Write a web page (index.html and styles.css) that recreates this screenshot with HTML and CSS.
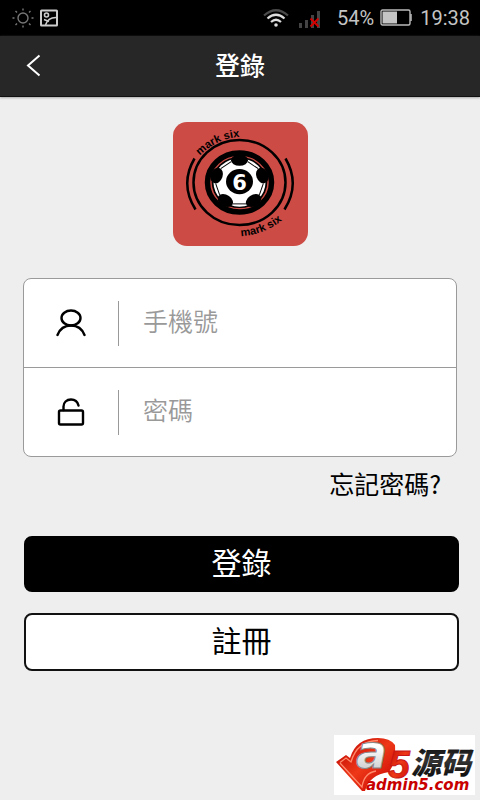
FILE: index.html
```html
<!DOCTYPE html>
<html lang="zh-Hant">
<head>
<meta charset="utf-8">
<meta name="viewport" content="width=device-width, initial-scale=1">
<title>登錄</title>
<link rel="stylesheet" href="styles.css">
</head>
<body>
<div class="status">
  <svg class="sun" width="22" height="20" viewBox="0 0 22 20" fill="none" stroke="#777" stroke-width="1.4" aria-hidden="true">
    <circle cx="11" cy="10" r="5"/>
    <path d="M11 .5v2M11 17.5v2M.5 10h2M19.5 10h2M3.5 3l1.5 1.4M17 15.6l1.5 1.4M3.5 17L5 15.6M17 4.400l1.500-1.400"/>
  </svg>
  <svg class="photo" width="18" height="18" viewBox="0 0 18 18" fill="none" stroke="#ccc" stroke-width="1.6" aria-hidden="true">
    <rect x="1" y="1.500" width="16" height="15" rx=".5" stroke-width="2"/>
    <circle cx="6.500" cy="6" r="2"/>
    <path d="M5.500 16C7 11 10 8.500 16 8.500M4 10.500l5 2"/>
  </svg>
  <svg class="wifi" width="26" height="20" viewBox="0 0 26 20" fill="none" stroke="#ddd" stroke-width="2.200" aria-hidden="true">
    <path d="M1 7.500Q13-3 25 7.500" stroke="#4a4a4a"/>
    <path d="M4.500 10.500Q13 3 21.500 10.500M8 14q5-4.500 10 0"/>
    <circle cx="13" cy="17" r="1.800" fill="#ddd" stroke="none"/>
  </svg>
  <svg class="signal" width="22" height="20" viewBox="0 0 22 20" aria-hidden="true">
    <path d="M0 15h3v5H0zM6 12h3v8H6zM12 7h3v13h-3zM18 3h3v17h-3z" fill="#444"/>
    <path d="M11.500 10.500l8 8M19.500 10.500l-8 8" stroke="#d40000" stroke-width="2"/>
  </svg>
  <span class="percent">54%</span>
  <svg class="battery" width="32" height="18" viewBox="0 0 32 18" fill="none" aria-hidden="true">
    <rect x="1" y="1" width="29" height="15" rx="1.500" stroke="#bbb" stroke-width="1.400"/>
    <path d="M31 5v7" stroke="#bbb" stroke-width="1.500"/>
    <rect x="2.500" y="2.500" width="14.500" height="12" fill="#c4c4c4"/>
  </svg>
  <time>19:38</time>
</div>

<header class="bar">
  <button class="back" type="button" aria-label="返回">
    <svg width="16" height="24" viewBox="0 0 16 24" fill="none" stroke="#fff" stroke-width="2"><path d="M14.500 1.500L3 11.500 14.500 21.500"/></svg>
  </button>
  <h1>登錄</h1>
</header>

<main>
  <svg class="logo" width="135" height="125" viewBox="0 0 135 125" role="img" aria-label="mark six">
    <defs>
      <path id="arc-top" d="M27 33.500A58 54 0 0 1 80 15.500"/>
      <path id="arc-bottom" d="M68 114A66 60 0 0 0 118 89"/>
    </defs>
    <rect width="135" height="124" rx="14" fill="#cc4b45"/>
    <g fill="none" stroke="#000">
      <ellipse cx="66.500" cy="60.500" rx="46" ry="42.500" stroke-width="2.500"/>
      <path d="M21.500 36.500Q6.500 62 22.500 87.500M112.500 36.500Q127.500 62 111.500 87.500" stroke-width="2.500"/>
      <ellipse cx="66.500" cy="60.500" rx="32" ry="29.500" stroke-width="5.500"/>
    </g>
    <ellipse cx="66.500" cy="60.500" rx="27.800" ry="25.600"/>
    <g transform="translate(66.500 60.500) scale(1 .93)">
      <circle r="26" fill="#fff"/>
      <g id="patches">
        <ellipse cy="-24" rx="8.500" ry="6"/>
        <ellipse cy="-24" rx="8.500" ry="6" transform="rotate(72)"/>
        <ellipse cy="-24" rx="8.500" ry="6" transform="rotate(144)"/>
        <ellipse cy="-24" rx="8.500" ry="6" transform="rotate(216)"/>
        <ellipse cy="-24" rx="8.500" ry="6" transform="rotate(288)"/>
      </g>
      <g stroke="#000" stroke-width="1">
        <path d="M-6.500 23H6.500"/>
        <path d="M-6.500 23H6.500" transform="rotate(72)"/>
        <path d="M-6.500 23H6.500" transform="rotate(144)"/>
        <path d="M-6.500 23H6.500" transform="rotate(216)"/>
        <path d="M-6.500 23H6.500" transform="rotate(288)"/>
      </g>
      <circle cy="-1" r="13.500"/>
    </g>
    <text class="six" x="66.500" y="68" text-anchor="middle">6</text>
    <text class="mark"><textPath href="#arc-top">mark six</textPath></text>
    <text class="mark"><textPath href="#arc-bottom">mark six</textPath></text>
  </svg>

  <form>
    <div class="fields">
      <div class="field">
        <label for="phone" aria-label="手機號">
          <svg width="30" height="28" viewBox="0 0 30 28" fill="none" stroke="#000" stroke-width="2.400" stroke-linecap="round"><ellipse cx="15" cy="9" rx="9.500" ry="7.500"/><path d="M1.500 26C4 19.500 9 16.500 15 16.500S26 19.500 28.500 26"/></svg>
        </label>
        <input id="phone" type="tel" placeholder="手機號">
      </div>
      <div class="field">
        <label for="password" aria-label="密碼">
          <svg width="30" height="28" viewBox="0 0 30 28" fill="none" stroke="#000" stroke-width="2.400" stroke-linecap="round"><rect x="3" y="12.500" width="24" height="14" rx="1.500"/><path d="M7.500 12V8.500C7.500 4.500 10.500 1.500 15 1.500c3.500 0 6.500 2 7.500 6"/></svg>
        </label>
        <input id="password" type="password" placeholder="密碼">
      </div>
    </div>
    <a class="forgot" href="#">忘記密碼?</a>
    <div class="actions">
      <button class="btn primary" type="submit">登錄</button>
      <button class="btn" type="button">註冊</button>
    </div>
  </form>
</main>

<footer>
  <svg class="site" width="141" height="60" viewBox="0 0 141 60" role="img" aria-label="A5源码 admin5.com">
    <defs>
      <linearGradient id="red" x1="0" y1="0" x2="1" y2="1"><stop offset="0" stop-color="#b80000"/><stop offset=".5" stop-color="#ee3818"/><stop offset="1" stop-color="#c40000"/></linearGradient>
      <linearGradient id="silver" x1="0" y1="0" x2="0" y2="1"><stop offset=".4" stop-color="#fff"/><stop offset="1" stop-color="#bbb"/></linearGradient>
      <linearGradient id="ink" x1="0" y1="0" x2="0" y2="1"><stop offset="0" stop-color="#000"/><stop offset=".5" stop-color="#333"/><stop offset="1" stop-color="#000"/></linearGradient>
    </defs>
    <rect width="141" height="60" fill="#fff"/>
    <path d="M2 27L12 20 16 23Q22 3 44 3Q56 3 61 10Q62 28 55 37Q35 40 31 56L28 56Z" fill="url(#red)"/>
    <path d="M6 27.500L12 23 17 27Q23 6 44 5.500M6 28L28 52Q30 38 42 36" fill="none" stroke="#ff8a6c" stroke-width="1.300"/>
    <text class="letter-a" x="22" y="33">a</text>
    <text class="five" x="54" y="43">5</text>
    <text class="source" x="77" y="39">源码</text>
    <text class="domain" x="32" y="55">admin5.com</text>
  </svg>
</footer>
</body>
</html>
```
FILE: styles.css
```css
* { box-sizing: border-box; }

body {
  margin: 0;
  min-height: 100vh;
  display: flex;
  flex-direction: column;
  background: #eee;
  color: #000;
  font-family: "Noto Sans CJK TC", sans-serif;
}

svg { display: block; flex: none; }

.status {
  display: flex;
  align-items: center;
  height: 36px;
  padding: 0 10px 0 12px;
  background: #000;
  color: #c4c4c4;
  font-family: Roboto, sans-serif;
  font-size: 20px;
}
.photo { margin-left: 6px; }
.wifi { margin-left: auto; }
.signal { margin-left: 10px; }
.percent { margin-left: 16px; }
.battery { margin: 0 8px 0 6px; }

.bar {
  display: grid;
  grid-template-columns: 68px 1fr 68px;
  align-items: center;
  height: 61px;
  background: #272727;
  border-bottom: 1px solid #111;
  box-shadow: 0 1px 2px #aaa;
  color: #fff;
}
.back {
  height: 60px;
  padding: 0 0 0 25px;
  border: 0;
  background: none;
}
h1 {
  margin: 0;
  padding-bottom: 4px;
  font-size: 25px;
  line-height: 36px;
  font-weight: 500;
  text-align: center;
}

main { padding: 25px 23px 0; }
.logo { margin: 0 auto; }
.mark { font: bold 11px "Liberation Sans", sans-serif; }
.six { font: bold 21px "DejaVu Sans", sans-serif; fill: #fff; }

form { margin-top: 31px; }
.fields {
  border: 1px solid #9a9a9a;
  border-radius: 8px;
  background: #fff;
}
.field {
  display: flex;
  align-items: center;
  height: 88px;
}
.field + .field {
  height: 89px;
  border-top: 1px solid #9a9a9a;
}
.field label {
  display: flex;
  align-items: center;
  justify-content: center;
  width: 95px;
  height: 45px;
  border-right: 1px solid #999;
}
.field input {
  flex: 1;
  min-width: 0;
  height: 60px;
  padding: 0 24px 6px;
  border: 0;
  outline: 0;
  background: none;
  font: 350 25px "Noto Sans CJK TC", sans-serif;
}
.field input::placeholder { color: #999; opacity: 1; }

.forgot {
  display: block;
  width: fit-content;
  margin: 8px 16px 0 auto;
  color: #000;
  font-size: 25px;
  line-height: 36px;
  text-decoration: none;
}

.actions {
  display: grid;
  gap: 21px;
  margin: 35px -2px 0 1px;
}
.btn {
  height: 58px;
  padding: 0 0 6px;
  border: 2px solid #111;
  border-radius: 8px;
  background: #fff;
  color: #000;
  font: 30px "Noto Sans CJK TC", sans-serif;
}
.btn.primary {
  height: 56px;
  background: #000;
  border-color: #000;
  color: #fff;
}

footer {
  display: flex;
  justify-content: flex-end;
  margin-top: auto;
  padding: 5px;
}
.site { overflow: visible; }
.letter-a { font: italic bold 46px "DejaVu Sans", sans-serif; fill: url(#silver); stroke: #888; stroke-width: 1px; }
.five { font: italic bold 39px "Liberation Sans", sans-serif; fill: url(#red); stroke: #c81414; stroke-width: 1px; }
.source { font: italic 900 30px "Noto Sans CJK SC", sans-serif; fill: url(#ink); }
.domain { font: italic bold 15px "DejaVu Sans", sans-serif; fill: #c80000; }
```
